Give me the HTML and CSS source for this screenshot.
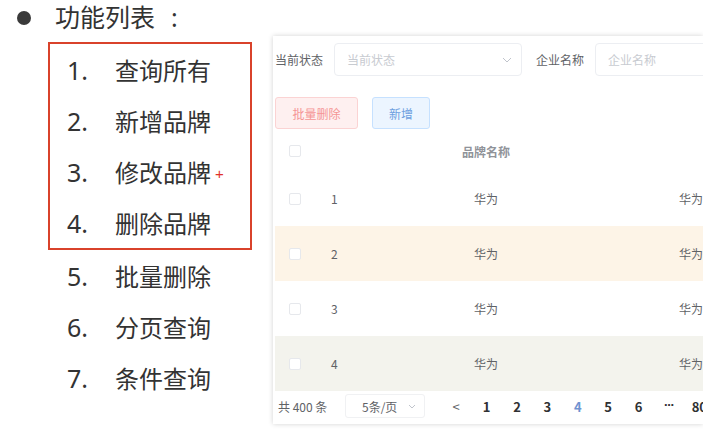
FILE: index.html
```html
<!DOCTYPE html>
<html lang="zh">
<head>
<meta charset="utf-8">
<title>功能列表</title>
<link rel="stylesheet" href="styles.css">
</head>
<body>
<div class="slide">
  <section class="outline">
    <h1 class="title"><span class="dot"></span>功能列表<span class="colon">:</span></h1>
    <ol class="box">
      <li><span class="num">1.</span>查询所有</li>
      <li><span class="num">2.</span>新增品牌</li>
      <li class="has-cursor"><span class="num">3.</span>修改品牌<span class="cursor">+</span></li>
      <li><span class="num">4.</span>删除品牌</li>
    </ol>
    <ol class="rest">
      <li><span class="num">5.</span>批量删除</li>
      <li><span class="num">6.</span>分页查询</li>
      <li><span class="num">7.</span>条件查询</li>
    </ol>
  </section>
  <section class="shot">
    <div class="panel">
      <div class="filters">
        <span class="label">当前状态</span>
        <div class="select">
          <span class="ph">当前状态</span>
          <svg class="chev" width="10" height="6" viewBox="0 0 10 6"><path d="M1 1 L5 5 L9 1" fill="none" stroke="#c0c4cc" stroke-width="1"/></svg>
        </div>
        <span class="label label-2">企业名称</span>
        <div class="input"><span class="ph">企业名称</span></div>
      </div>
      <div class="actions">
        <button class="btn btn-danger">批量删除</button>
        <button class="btn btn-primary">新增</button>
      </div>
      <div class="table">
        <div class="row head">
          <div class="c1"><span class="check"></span></div>
          <div class="c2"></div>
          <div class="c3">品牌名称</div>
          <div class="c4"></div>
        </div>
        <div class="row">
          <div class="c1"><span class="check"></span></div>
          <div class="c2">1</div>
          <div class="c3">华为</div>
          <div class="c4">华为</div>
        </div>
        <div class="row warn">
          <div class="c1"><span class="check"></span></div>
          <div class="c2">2</div>
          <div class="c3">华为</div>
          <div class="c4">华为</div>
        </div>
        <div class="row">
          <div class="c1"><span class="check"></span></div>
          <div class="c2">3</div>
          <div class="c3">华为</div>
          <div class="c4">华为</div>
        </div>
        <div class="row ok">
          <div class="c1"><span class="check"></span></div>
          <div class="c2">4</div>
          <div class="c3">华为</div>
          <div class="c4">华为</div>
        </div>
      </div>
      <div class="pager">
        <span class="total">共 400 条</span>
        <div class="size">5条/页<svg class="chev small" width="8" height="5" viewBox="0 0 8 5"><path d="M1 1 L4 4 L7 1" fill="none" stroke="#c0c4cc" stroke-width="1"/></svg></div>
        <ul class="pages">
          <li class="prev">&lt;</li>
          <li>1</li>
          <li>2</li>
          <li>3</li>
          <li class="active">4</li>
          <li>5</li>
          <li>6</li>
          <li class="more">···</li>
          <li>80</li>
        </ul>
      </div>
    </div>
  </section>
</div>
</body>
</html>
```

FILE: styles.css
```css
* { box-sizing: border-box; }
html, body {
  margin: 0;
  padding: 0;
  background: #fff;
  overflow: hidden;
}
body {
  width: 703px;
  height: 429px;
  font-family: "Noto Sans", "Noto Sans CJK SC", sans-serif;
  color: #333;
}
.slide {
  display: flex;
  height: 429px;
}

/* left outline */
.outline {
  width: 273px;
  flex: none;
}
.title {
  margin: 0;
  height: 34px;
  display: flex;
  align-items: center;
  font-size: 25px;
  font-weight: normal;
  line-height: 34px;
  color: #333;
}
.colon { margin-left: 16px; }
.dot {
  width: 14px;
  height: 14px;
  border-radius: 50%;
  background: #3a3a3a;
  margin-left: 17px;
  margin-right: 24px;
  margin-top: 2px;
}
.box, .rest {
  list-style: none;
  margin: 0;
  padding: 0;
}
.box {
  margin-top: 8px;
  margin-left: 48px;
  width: 204px;
  border: 2px solid #d9422b;
  padding-left: 17px;
}
.rest {
  margin-left: 67px;
}
.box li, .rest li {
  height: 51px;
  display: flex;
  align-items: center;
  font-size: 24px;
  color: #333;
}
.num {
  width: 48px;
  font-size: 25px;
}
.has-cursor { position: relative; }
.cursor {
  position: absolute;
  left: 148px;
  top: 20px;
  font-size: 15px;
  line-height: 15px;
  font-family: "Liberation Sans", sans-serif;
  color: #e0302a;
}

/* right screenshot */
.shot {
  flex: 1;
  min-width: 0;
  padding-top: 36px;
}
.panel {
  width: 430px;
  height: 388px;
  overflow: hidden;
  background: #fff;
  box-shadow: 0 0 5px rgba(0,0,0,0.18);
  padding-left: 2px;
  font-family: "Noto Sans CJK SC", sans-serif;
  font-size: 12px;
  color: #606266;
}
.filters {
  display: flex;
  align-items: center;
  margin-top: 7px;
  height: 33px;
}
.label {
  width: 47px;
  margin-right: 12px;
  color: #606266;
  white-space: nowrap;
  flex: none;
}
.label-2 { margin-left: 14px; }
.select, .input {
  height: 33px;
  border: 1px solid #eceef2;
  border-radius: 4px;
  display: flex;
  align-items: center;
  padding-left: 12px;
  flex: none;
}
.select {
  width: 188px;
  justify-content: space-between;
  padding-right: 9px;
}
.input { width: 200px; }
.ph { color: #c8cbd1; }
.chev { display: block; }

.actions {
  display: flex;
  gap: 14px;
  margin-top: 21px;
}
.btn {
  height: 32px;
  border-radius: 3px;
  font-family: "Noto Sans CJK SC", sans-serif;
  font-size: 12px;
  padding: 0;
}
.btn-danger {
  width: 83px;
  background: #fef0f0;
  border: 1px solid #fbd3d3;
  color: #f59595;
}
.btn-primary {
  width: 58px;
  background: #ecf5ff;
  border: 1px solid #c6e1ff;
  color: #6d9fe0;
}

.table { margin-top: 2px; }
.row {
  display: flex;
  height: 55px;
  align-items: center;
}
.row.head {
  height: 40px;
  color: #909399;
  font-weight: bold;
}
.row.warn { background: #fdf4e7; }
.row.ok { background: #f3f3ed; }
.c1 {
  width: 40px;
  flex: none;
  display: flex;
  justify-content: center;
}
.c2 { width: 105px; flex: none; padding-left: 16px; }
.c3 { width: 132px; flex: none; text-align: center; }
.c4 { flex: none; padding-left: 127px; white-space: nowrap; }
.check {
  display: block;
  width: 12px;
  height: 12px;
  border: 1px solid #e6e8ec;
  border-radius: 2px;
  background: #fff;
}

.pager {
  display: flex;
  align-items: center;
  height: 30px;
  padding-left: 3px;
}
.total { width: 67px; flex: none; color: #606266; }
.size {
  width: 80px;
  flex: none;
  height: 24px;
  border: 1px solid #f0f1f3;
  border-radius: 3px;
  display: flex;
  align-items: center;
  justify-content: space-between;
  padding: 0 8px 0 16px;
  color: #606266;
}
.pages {
  list-style: none;
  margin: 0 0 0 16px;
  padding: 0;
  display: flex;
  flex: none;
}
.pages li {
  width: 30.4px;
  text-align: center;
  font-weight: bold;
  font-size: 13px;
  color: #303133;
}
.pages li.prev { font-weight: normal; color: #606266; }
.pages li.active { color: #6f93d0; }
.pages li.more {
  font-family: "Liberation Sans", sans-serif;
  letter-spacing: -1px;
}
```
